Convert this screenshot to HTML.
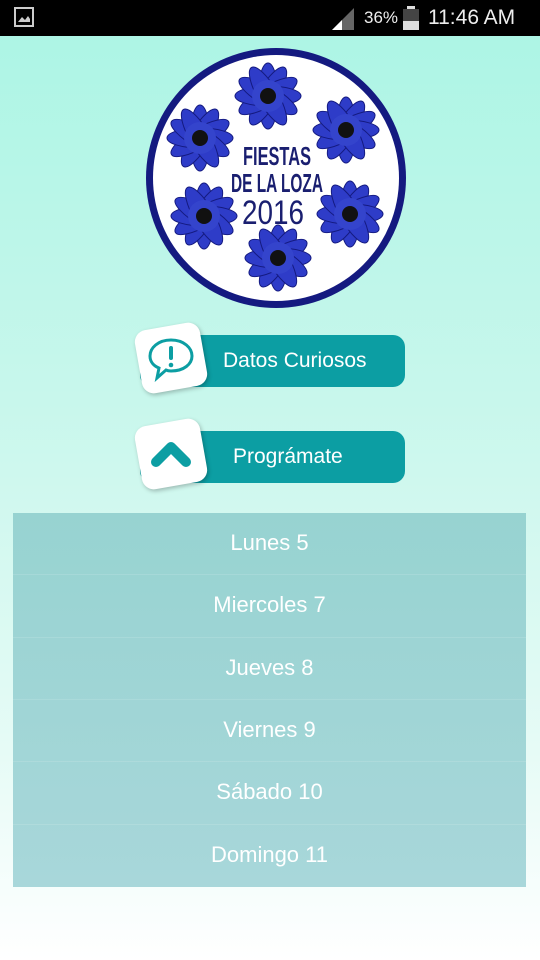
<!DOCTYPE html>
<html><head><meta charset="utf-8"><style>
*{margin:0;padding:0;box-sizing:border-box}
body{width:540px;height:960px;overflow:hidden;font-family:"Liberation Sans",sans-serif;background:linear-gradient(#adf5e5 36px,#c8f7ec 400px,#e6fbf6 750px,#fff 960px);position:relative}
.sb{position:absolute;top:0;left:0;width:540px;height:36px;background:#000;color:#fff}
.btn{position:absolute;left:140px;width:265px;height:52px;background:#0c9ea3;border-radius:12px;color:#fff;font-size:21px;line-height:52px}
.ic{position:absolute;left:-2px;top:-9px;width:66px;height:64px;background:#fff;border-radius:12px;transform:rotate(-10deg);box-shadow:1px 2px 4px rgba(0,0,0,.25)}
.ic svg{transform:rotate(10deg)}
.list{position:absolute;left:13px;top:513px;width:513px;height:374px;background:linear-gradient(#97d3d1,#a8d7da)}
.row{height:62.33px;line-height:60px;text-align:center;color:#fff;font-size:22px;border-bottom:1px solid rgba(255,255,255,.12)}
</style></head><body>
<div class="sb">
<svg style="position:absolute;left:14px;top:7px" width="20" height="20"><rect x="1" y="1" width="18" height="18" fill="none" stroke="#ccc" stroke-width="2"/><path d="M4 15 L8 10 L11 13 L14 9 L16 12 V15Z" fill="#ccc"/></svg>
<svg style="position:absolute;left:330px;top:6px" width="26" height="24"><path d="M2 24 L24 2 V24Z" fill="#666"/><path d="M2 24 L12 14 V24Z" fill="#fff"/></svg>
<span style="position:absolute;left:364px;top:8px;font-size:17px;color:#eee">36%</span>
<svg style="position:absolute;left:403px;top:6px" width="16" height="24"><rect x="4" y="0" width="8" height="3" fill="#ddd"/><rect x="0" y="3" width="16" height="21" fill="#444"/><rect x="0" y="15" width="16" height="9" fill="#ddd"/></svg>
<span style="position:absolute;left:428px;top:6px;font-size:21px;color:#eee">11:46 AM</span>
</div>
<svg style="position:absolute;left:144px;top:46px" width="264" height="264" viewBox="0 0 264 264">
<defs>
<g id="f">
<g fill="#2e3cc8" stroke="#141a80" stroke-width="1">
<ellipse rx="10" ry="33" /><ellipse rx="10" ry="33" transform="rotate(30)"/><ellipse rx="10" ry="33" transform="rotate(60)"/><ellipse rx="10" ry="33" transform="rotate(90)"/><ellipse rx="10" ry="33" transform="rotate(120)"/><ellipse rx="10" ry="33" transform="rotate(150)"/>
</g>
<circle r="16" fill="#3444cc"/>
<circle r="8" fill="#111"/></g>
</defs>
<circle cx="132" cy="132" r="130" fill="#141a80"/>
<circle cx="132" cy="132" r="123" fill="#fff"/>
<use href="#f" x="124" y="50"/>
<use href="#f" x="202" y="84"/>
<use href="#f" x="206" y="168"/>
<use href="#f" x="134" y="212"/>
<use href="#f" x="60" y="170"/>
<use href="#f" x="56" y="92"/>
<text x="99" y="119" textLength="68" lengthAdjust="spacingAndGlyphs" font-family="Liberation Sans Narrow,Liberation Sans,sans-serif" font-weight="bold" font-size="26" fill="#1a1f70">FIESTAS</text>
<text x="87" y="146" textLength="92" lengthAdjust="spacingAndGlyphs" font-family="Liberation Sans Narrow,Liberation Sans,sans-serif" font-weight="bold" font-size="26" fill="#1a1f70">DE LA LOZA</text>
<text x="98" y="178" textLength="62" lengthAdjust="spacingAndGlyphs" font-family="Liberation Sans Narrow,Liberation Sans,sans-serif" font-size="34" fill="#1a1f70">2016</text>
</svg>
<div class="btn" style="top:335px"><div class="ic"><svg width="66" height="64"><path d="M33 14 C20 14 12 22 12 30 C12 36 16 40 21 42 L19 52 L28 44 C30 45 31 45 33 45 C46 45 54 38 54 30 C54 22 46 14 33 14Z" fill="none" stroke="#0c9ea3" stroke-width="3"/><rect x="31" y="20" width="4" height="14" rx="2" fill="#0c9ea3"/><circle cx="33" cy="39" r="2.3" fill="#0c9ea3"/></svg></div><span style="position:absolute;left:83px">Datos Curiosos</span></div>
<div class="btn" style="top:431px"><div class="ic"><svg width="66" height="64"><path d="M18 40 L33 25 L48 40" fill="none" stroke="#0c9ea3" stroke-width="10" stroke-linecap="round" stroke-linejoin="round"/></svg></div><span style="position:absolute;left:93px">Prográmate</span></div>
<div class="list">
<div class="row">Lunes 5</div><div class="row">Miercoles 7</div><div class="row">Jueves 8</div><div class="row">Viernes 9</div><div class="row">Sábado 10</div><div class="row" style="border:0">Domingo 11</div>
</div>
</body></html>
